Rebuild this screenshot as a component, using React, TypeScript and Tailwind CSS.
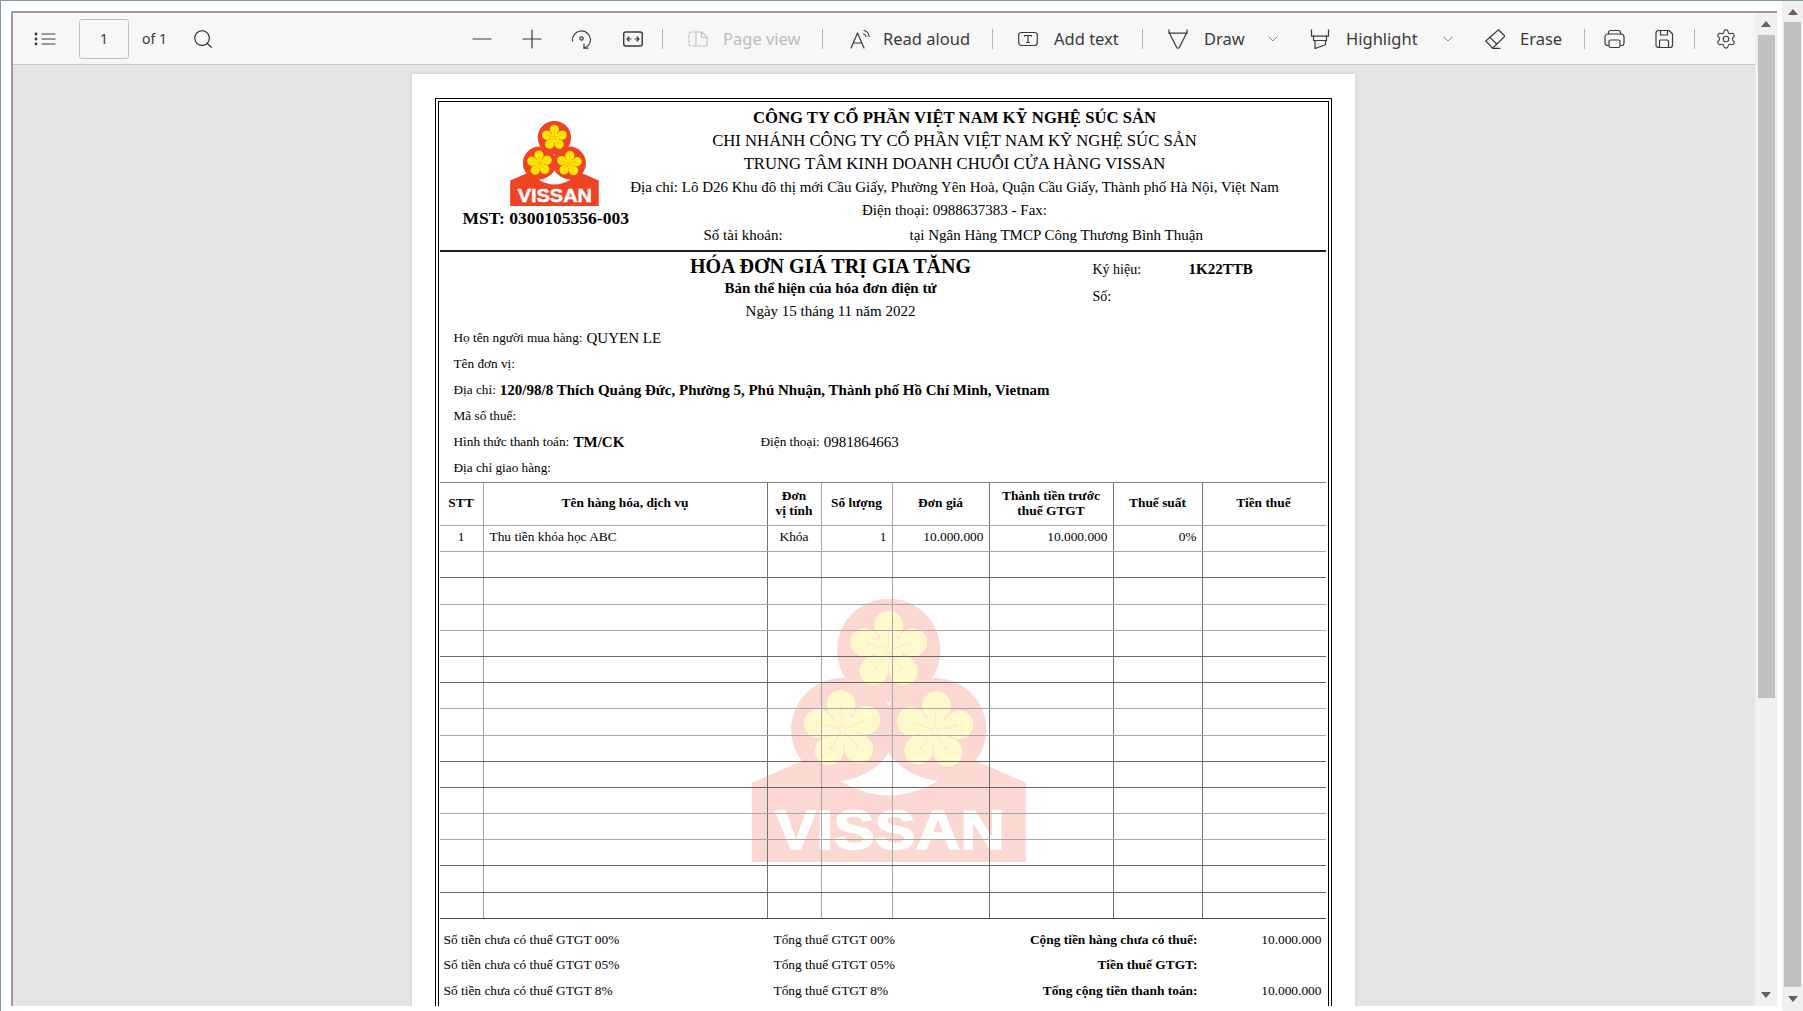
import React from "react";
import { Search, Settings, ChevronDown } from "lucide-react";

const serif = "font-['Liberation_Serif','Times_New_Roman',serif]";
const ui = "font-['Noto_Sans',sans-serif]";

const colGrid = "grid grid-cols-[44px_284px_54px_71px_97px_124px_89px_122px]";
const colLines = [
  "border-r border-r-[#a0a0a0]",
  "border-r border-r-[#707070]",
  "border-r border-r-[#a8a8a8]",
  "border-r border-r-[#a8a8a8]",
  "border-r border-r-[#707070]",
  "border-r border-r-[#707070]",
  "border-r border-r-[#707070]",
  "",
];

// the horizontal rules alternate in weight in the rendered pdf
const rowLines = [
  "border-b-[#a8a8a8]",
  "border-b-[#666]",
  "border-b-[#a8a8a8]",
  "border-b-[#a8a8a8]",
  "border-b-[#666]",
  "border-b-[#666]",
  "border-b-[#a8a8a8]",
  "border-b-[#a8a8a8]",
  "border-b-[#666]",
  "border-b-[#666]",
  "border-b-[#a8a8a8]",
  "border-b-[#a8a8a8]",
  "border-b-[#666]",
  "border-b-[#666]",
  "border-b-[#444]",
];

const headers = [
  ["STT"],
  ["Tên hàng hóa, dịch vụ"],
  ["Đơn", "vị tính"],
  ["Số lượng"],
  ["Đơn giá"],
  ["Thành tiền trước", "thuế GTGT"],
  ["Thuế suất"],
  ["Tiền thuế"],
];

const firstRow = [
  { text: "1", cls: "justify-center" },
  { text: "Thu tiền khóa học ABC", cls: "pl-[6px]" },
  { text: "Khóa", cls: "justify-center" },
  { text: "1", cls: "justify-end pr-[5px]" },
  { text: "10.000.000", cls: "justify-end pr-[5px]" },
  { text: "10.000.000", cls: "justify-end pr-[5px]" },
  { text: "0%", cls: "justify-end pr-[5px]" },
  { text: "", cls: "" },
];

const totals = [
  ["Số tiền chưa có thuế GTGT 00%", "Tổng thuế GTGT 00%", "Cộng tiền hàng chưa có thuế:", "10.000.000"],
  ["Số tiền chưa có thuế GTGT 05%", "Tổng thuế GTGT 05%", "Tiền thuế GTGT:", ""],
  ["Số tiền chưa có thuế GTGT 8%", "Tổng thuế GTGT 8%", "Tổng cộng tiền thanh toán:", "10.000.000"],
];

function Flower({ cx, cy, rot }: { cx: number; cy: number; rot: number }) {
  const angles = [0, 72, 144, 216, 288];
  return (
    <g transform={`translate(${cx} ${cy}) rotate(${rot})`}>
      <circle r="45" fill="#ffe600" />
      {angles.map((a) => (
        <g key={a} transform={`rotate(${a})`}>
          <ellipse cx="0" cy="-75" rx="43" ry="44" fill="#ffe600" />
          <line x1="0" y1="-12" x2="0" y2="-62" stroke="#ee4423" strokeWidth="2.5" strokeOpacity="0.7" />
          <circle cx="0" cy="-65" r="3.5" fill="#ee4423" fillOpacity="0.7" />
        </g>
      ))}
      <circle r="10" fill="#ffe600" stroke="#ee4423" strokeWidth="2.5" strokeOpacity="0.7" />
    </g>
  );
}

function VissanLogo({ className }: { className: string }) {
  return (
    <svg viewBox="65 58 824 790" className={className}>
      <path d="M65 610 L215 545 H740 L888 610 V848 H65 Z" fill="#ee4423" />
      <circle cx="476" cy="212" r="155" fill="#ee4423" />
      <circle cx="338" cy="450" r="155" fill="#ee4423" />
      <circle cx="614" cy="450" r="155" fill="#ee4423" />
      <path d="M330 605 Q430 590 476 520 Q525 590 625 605 Q476 692 330 605 Z" fill="#fff" />
      <Flower cx={476} cy={212} rot={0} />
      <Flower cx={338} cy={450} rot={-4} />
      <Flower cx={614} cy={454} rot={4} />
      <text
        x="135"
        y="808"
        textLength="690"
        lengthAdjust="spacingAndGlyphs"
        fill="#fff"
        stroke="#fff"
        strokeWidth="4"
        fontFamily="Liberation Sans, Arial, sans-serif"
        fontWeight="700"
        fontSize="164"
      >
        VISSAN
      </text>
    </svg>
  );
}

function Ico({ children, w = 20, cls = "" }: { children: React.ReactNode; w?: number; cls?: string }) {
  return (
    <svg
      viewBox={`0 0 ${w} 20`}
      width={w}
      height={20}
      fill="none"
      stroke="currentColor"
      strokeWidth="1.2"
      strokeLinecap="round"
      strokeLinejoin="round"
      className={`shrink-0 ${cls}`}
    >
      {children}
    </svg>
  );
}

function Sep({ cls }: { cls: string }) {
  return <div className={`h-[20px] w-[1px] bg-[#b4b4b4] shrink-0 ${cls}`} />;
}

function Label({ children, cls }: { children: React.ReactNode; cls: string }) {
  return <span className={`shrink-0 whitespace-nowrap pt-[2px] text-[16.5px] leading-none ${cls}`}>{children}</span>;
}

function Toolbar() {
  return (
    <div className={`flex h-[52px] shrink-0 items-center border-b border-b-[#c4c4c4] bg-[#f7f7f7] text-[#3a3a3a] ${ui}`}>
      <Ico w={22} cls="ml-[21px]">
        <path d="M8 5h13M8 10h13M8 15h13" />
        <circle cx="2" cy="5" r=".8" fill="currentColor" />
        <circle cx="2" cy="10" r=".8" fill="currentColor" />
        <circle cx="2" cy="15" r=".8" fill="currentColor" />
      </Ico>
      <div className="ml-[23px] flex h-[40px] w-[50px] shrink-0 items-center justify-center rounded-[3px] border border-[#c2c2c2] text-[14px]">
        1
      </div>
      <span className="ml-[13px] w-[24px] shrink-0 whitespace-nowrap text-[14px]">of 1</span>
      <Search size={22} strokeWidth={1.2} className="ml-[26px] shrink-0 text-[#222]" />

      <Ico cls="ml-[258px]">
        <path d="M1 10h18" />
      </Ico>
      <Ico cls="ml-[30px]">
        <path d="M1 10h18M10 1v18" />
      </Ico>
      <Ico w={21} cls="ml-[29px]">
        <path d="M1.500 12A9 9 0 0 1 19.500 10a9 9 0 0 1-6.500 9" />
        <path d="M13 15v4.200h4" />
        <circle cx="10.500" cy="9.500" r="1.700" />
      </Ico>
      <Ico cls="ml-[31px]">
        <rect x=".7" y="3" width="18.600" height="14" rx="2" strokeWidth="1.500" />
        <path d="M4 10h4M4 10l2-2M4 10l2 2M12 10h4M16 10l-2-2M16 10l-2 2" />
      </Ico>
      <Sep cls="ml-[19px]" />
      <Ico cls="ml-[25px] text-[#c4c4c4]">
        <path d="M8 3H3a2 2 0 0 0-2 2v10a2 2 0 0 0 2 2h5" strokeDasharray="2.500 2" />
        <path d="M8 3h6l5 5v7a2 2 0 0 1-2 2H8zM13.500 3v5.500H19" />
      </Ico>
      <Label cls="ml-[15px] w-[77px] text-[#bdbdbd]">Page view</Label>
      <Sep cls="ml-[22px]" />
      <Ico cls="ml-[27px]">
        <path d="M1 19 7.500 4 14 19M3.200 14h8.600" />
        <path d="M14 1.500a6 6 0 0 1 5 6M13.500 5a3 3 0 0 1 2.500 2.500" />
      </Ico>
      <Label cls="ml-[13px] w-[88px]">Read aloud</Label>
      <Sep cls="ml-[21px]" />
      <Ico cls="ml-[25px]">
        <rect x=".7" y="3.500" width="18.600" height="13" rx="3" />
        <path d="M6.500 7.200v-.7h7v.7M10 6.500v7M8.500 13.500h3" />
      </Ico>
      <Label cls="ml-[16px] w-[66px]">Add text</Label>
      <Sep cls="ml-[22px]" />
      <Ico cls="ml-[25px]">
        <path d="M1 .8v3.400h18V.8" />
        <path d="M1.500 4.200 8.700 18.500c.5.8 2.100.8 2.600 0L18.500 4.200" />
      </Ico>
      <Label cls="ml-[16px] w-[39px]">Draw</Label>
      <ChevronDown size={16} strokeWidth={1} className="ml-[22px] shrink-0 text-[#555]" />
      <Ico cls="ml-[29px]">
        <path d="M1.500 .8v6.400h17V.8" />
        <path d="M3.500 7.200v4.300h13V7.200M5 11.500v8l10.500-3.800v-4.200" />
      </Ico>
      <Label cls="ml-[16px] w-[72px]">Highlight</Label>
      <ChevronDown size={16} strokeWidth={1} className="ml-[22px] shrink-0 text-[#555]" />
      <Ico cls="ml-[29px]">
        <path d="M.8 12 13.500.8l6.500 6.400L7.500 19.200z" />
        <path d="M4.800 8.400l7 6.600M7.500 19.400H15" />
      </Ico>
      <Label cls="ml-[15px] w-[40px]">Erase</Label>
      <Sep cls="ml-[24px]" />
      <Ico w={21} cls="ml-[19px]">
        <path d="M4.500 5V3.500a2 2 0 0 1 2-2h8a2 2 0 0 1 2 2V5" />
        <path d="M4.500 16.500H3.500a2.500 2.500 0 0 1-2.500-2.500V8a3 3 0 0 1 3-3h13a3 3 0 0 1 3 3v6a2.500 2.500 0 0 1-2.500 2.500h-1" />
        <rect x="5" y="11" width="11" height="7.500" rx="1.500" />
      </Ico>
      <Ico cls="ml-[30px]">
        <path d="M3.500 1.500h10.500l3.500 3.500v11a2.500 2.500 0 0 1-2.500 2.500h-11.500A2.500 2.500 0 0 1 1 16V4a2.500 2.500 0 0 1 2.500-2.500z" />
        <path d="M5.500 1.500v4.500h7V1.500M4.500 18.500v-6.500a1 1 0 0 1 1-1h7a1 1 0 0 1 1 1v6.500" />
      </Ico>
      <Sep cls="ml-[19px]" />
      <Settings size={22} strokeWidth={1.2} className="ml-[20px] shrink-0" />
    </div>
  );
}

function ScrollArrow({ up }: { up?: boolean }) {
  return (
    <svg viewBox="0 0 10 6" width={10} height={6} className="fill-[#606060]">
      <polygon points={up ? "5,0 10,6 0,6" : "0,0 10,0 5,6"} />
    </svg>
  );
}

function InvoiceHeader() {
  return (
    <div className="flex h-[150px] border-b-2 border-b-[#222]">
      <div className="w-[170px] shrink-0 pl-[23px] pt-[19px]">
        <VissanLogo className="ml-[47px] h-[85px] w-[89px]" />
        <div className="whitespace-nowrap text-[17.500px] font-bold leading-[24px]">MST: 0300105356-003</div>
      </div>
      <div className="w-[690px] shrink-0 pt-[4px] text-center leading-[23.200px]">
        <div className="whitespace-nowrap text-[16.700px] font-bold">CÔNG TY CỔ PHẦN VIỆT NAM KỸ NGHỆ SÚC SẢN</div>
        <div className="whitespace-nowrap text-[16.700px]">CHI NHÁNH CÔNG TY CỔ PHẦN VIỆT NAM KỸ NGHỆ SÚC SẢN</div>
        <div className="whitespace-nowrap text-[16.700px]">TRUNG TÂM KINH DOANH CHUỖI CỬA HÀNG VISSAN</div>
        <div className="whitespace-nowrap text-[15px]">
          Địa chỉ: Lô D26 Khu đô thị mới Cầu Giấy, Phường Yên Hoà, Quận Cầu Giấy, Thành phố Hà Nội, Việt Nam
        </div>
        <div className="whitespace-nowrap text-[15px]">Điện thoại: 0988637383 - Fax:</div>
        <div className="flex whitespace-nowrap pt-[2px] text-left text-[15px]">
          <span className="ml-[94px] w-[206px]">Số tài khoản:</span>
          <span>tại Ngân Hàng TMCP Công Thương Bình Thuận</span>
        </div>
      </div>
    </div>
  );
}

function InfoRow({ children }: { children: React.ReactNode }) {
  return <div className="flex h-[26px] items-center whitespace-nowrap pl-[14px] text-[13.250px]">{children}</div>;
}

function InvoiceTitle() {
  return (
    <>
      <div className="flex">
        <div className="mb-[1px] ml-[149px] w-[484px] pt-[2px] text-center">
          <div className="h-[25px] text-[20px] font-bold leading-[25px]">HÓA ĐƠN GIÁ TRỊ GIA TĂNG</div>
          <div className="h-[20px] text-[15px] font-bold leading-[19px]">Bản thể hiện của hóa đơn điện tử</div>
          <div className="h-[25px] text-[15px] leading-[25px]">Ngày 15 tháng 11 năm 2022</div>
        </div>
        <div className="ml-[20px] pt-[5px] text-[14px]">
          <div className="flex h-[24px] items-center">
            <span className="w-[96px]">Ký hiệu:</span>
            <span className="text-[15px] font-bold">1K22TTB</span>
          </div>
          <div className="mt-[3px] flex h-[24px] items-center">Số:</div>
        </div>
      </div>
      <InfoRow>
        Họ tên người mua hàng:<span className="ml-[4px] text-[15px]">QUYEN LE</span>
      </InfoRow>
      <InfoRow>Tên đơn vị:</InfoRow>
      <InfoRow>
        Địa chỉ:
        <span className="ml-[4px] text-[15px] font-bold">
          120/98/8 Thích Quảng Đức, Phường 5, Phú Nhuận, Thành phố Hồ Chí Minh, Vietnam
        </span>
      </InfoRow>
      <InfoRow>Mã số thuế:</InfoRow>
      <InfoRow>
        <span className="w-[120px]">Hình thức thanh toán:</span>
        <span className="w-[187px] text-[15px] font-bold">TM/CK</span>
        Điện thoại:<span className="ml-[4px] text-[15px]">0981864663</span>
      </InfoRow>
      <InfoRow>Địa chỉ giao hàng:</InfoRow>
    </>
  );
}

function ItemsTable() {
  const emptyRows = rowLines.slice(1);
  return (
    <div className="relative mt-[1px] border-t border-t-[#888] text-[13.400px]">
      <div className={`${colGrid} h-[43px] border-b border-b-[#a8a8a8]`}>
        {headers.map((lines, i) => (
          <div
            key={i}
            className={`flex flex-col items-center justify-center pb-[3px] text-center font-bold leading-[15px] ${colLines[i]}`}
          >
            {lines.map((l) => (
              <span key={l} className="whitespace-nowrap">
                {l}
              </span>
            ))}
          </div>
        ))}
      </div>
      <div className={`${colGrid} h-[26.200px] border-b ${rowLines[0]}`}>
        {firstRow.map((c, i) => (
          <div key={i} className={`flex items-center whitespace-nowrap pb-[4px] ${c.cls} ${colLines[i]}`}>
            {c.text}
          </div>
        ))}
      </div>
      {emptyRows.map((line, r) => (
        <div key={r} className={`${colGrid} h-[26.200px] border-b ${line}`}>
          {colLines.map((c, i) => (
            <div key={i} className={c} />
          ))}
        </div>
      ))}
    </div>
  );
}

function Totals() {
  return (
    <div className="pt-[8px] pb-[300px] text-[13.400px]">
      {totals.map((t) => (
        <div
          key={t[0]}
          className="grid h-[25.500px] grid-cols-[334px_250px_174px_124px] items-center whitespace-nowrap"
        >
          <div className="pl-[4px]">{t[0]}</div>
          <div>{t[1]}</div>
          <div className="text-right font-bold">{t[2]}</div>
          <div className="text-right">{t[3]}</div>
        </div>
      ))}
    </div>
  );
}

export default function App() {
  return (
    <div className="flex h-screen w-screen overflow-hidden border-l border-t border-[#7d9bad] bg-white">
      <div className="mb-[5px] ml-[10px] mt-[10px] flex min-w-0 flex-1 flex-col border-l-2 border-t-2 border-[#9c9c9c]">
        <div className="flex min-h-0 flex-1">
          <div className="flex min-w-0 flex-1 flex-col">
            <Toolbar />
            <div className="flex min-h-0 flex-1 justify-center overflow-hidden bg-[#e5e5e5] pr-[2px] pt-[9px]">
              <div className={`h-max w-[943px] shrink-0 bg-white px-[23px] pt-[24px] text-black shadow-[0_0_4px_rgba(0,0,0,0.12)] ${serif}`}>
                <div className="relative border-4 border-double border-black pl-[1px] pr-[2px]">
                  <VissanLogo className="absolute left-[312px] top-[497px] h-[263px] w-[276px] opacity-20" />
                  <div className="relative">
                    <InvoiceHeader />
                    <InvoiceTitle />
                    <ItemsTable />
                    <Totals />
                  </div>
                </div>
              </div>
            </div>
          </div>
          <div className="flex w-[22px] shrink-0 flex-col items-center bg-[#f0f0f0]">
            <div className="flex h-[22px] w-full shrink-0 items-center justify-center">
              <ScrollArrow up />
            </div>
            <div className="h-[663px] w-[17px] shrink-0 bg-[#c1c1c1]" />
            <div className="flex-1" />
            <div className="flex h-[22px] w-full shrink-0 items-center justify-center">
              <ScrollArrow />
            </div>
          </div>
        </div>
      </div>
      <div className="ml-[5px] flex w-[21px] shrink-0 flex-col items-center bg-[#f0f0f0]">
        <div className="flex h-[21px] w-full shrink-0 items-center justify-center">
          <ScrollArrow up />
        </div>
        <div className="h-[965px] w-[17px] shrink-0 bg-[#c1c1c1]" />
        <div className="flex flex-1 items-center justify-center">
          <ScrollArrow />
        </div>
      </div>
    </div>
  );
}
